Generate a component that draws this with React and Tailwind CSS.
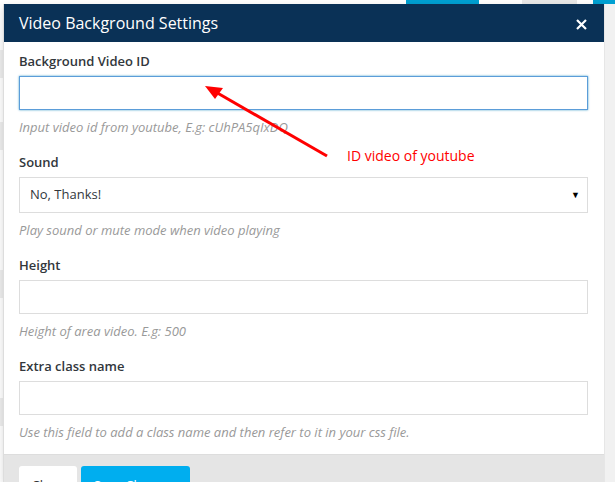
import React from 'react'

const font = { fontFamily: '"Open Sans", "Noto Sans", sans-serif' }

function Field({ label, hint, children }) {
  return (
    <div className="flex flex-col">
      <label className="text-[13px] leading-[20px] font-semibold text-[#32373c] mb-[5px]">{label}</label>
      {children}
      <p className="mt-[7px] text-[13px] leading-[20px] italic text-[#999]">{hint}</p>
    </div>
  )
}

function TextInput({ focused }) {
  return (
    <div className={focused
      ? 'h-[34px] bg-white border border-[#5b9dd9] shadow-[0_0_2px_rgba(30,140,190,0.8)]'
      : 'h-[34px] bg-white border border-[#ddd]'} />
  )
}

export default function App() {
  return (
    <div className="relative w-[615px] h-[482px] overflow-hidden bg-[#f1f1f1] flex flex-col" style={font}>
      {/* page behind the dialog */}
      <div className="h-[4px] flex bg-white shrink-0">
        <div className="w-[406px]" />
        <div className="w-[73px] bg-[#00a0d2]" />
        <div className="w-[43px]" />
        <div className="w-[55px] bg-[#e8e8e8]" />
        <div className="w-[16px]" />
        <div className="flex-1 bg-[#00a0d2]" />
      </div>
      <div className="flex flex-1 min-h-0">
        <div className="w-[3px] flex flex-col bg-white">
          <div className="h-[46px]" />
          <div className="h-[28px] bg-[#eee]" />
          <div className="h-[44px]" />
          <div className="h-[28px] bg-[#eee]" />
          <div className="h-[120px]" />
          <div className="h-[28px] bg-[#eee]" />
          <div className="h-[100px]" />
          <div className="h-[28px] bg-[#eee]" />
        </div>

        {/* dialog */}
        <div className="w-[601px] flex flex-col bg-white border-l border-[#ddd] shadow-[0_3px_8px_rgba(0,0,0,0.15)]">
          <div className="h-[38px] bg-[#0a3156] flex items-center justify-between pl-[15px] pr-[17px] shrink-0">
            <h2 className="text-[16px] text-white leading-none">Video Background Settings</h2>
            <svg width="11" height="11" viewBox="0 0 11 11" className="mt-[2px]">
              <path d="M1 1L10 10M10 1L1 10" stroke="white" strokeWidth="2.2" />
            </svg>
          </div>

          <div className="flex flex-col gap-[15px] pl-[15px] pr-4 pt-[9px] pb-[12px] border-b border-[#ddd]">
            <Field label="Background Video ID" hint="Input video id from youtube, E.g: cUhPA5qIxDQ">
              <TextInput focused />
            </Field>
            <Field label="Sound" hint="Play sound or mute mode when video playing">
              <div className="h-[36px] border border-[#ddd] bg-white flex items-center justify-between pl-[10px] pr-[7px]">
                <span className="text-[13px] text-[#32373c]">No, Thanks!</span>
                <span className="text-[9px] text-black">▼</span>
              </div>
            </Field>
            <Field label="Height" hint="Height of area video. E.g: 500">
              <TextInput />
            </Field>
            <Field label="Extra class name" hint="Use this field to add a class name and then refer to it in your css file.">
              <TextInput />
            </Field>
          </div>

          <div className="flex-1 bg-[#e5e5e5] flex items-start gap-[4px] pl-[15px] pt-[11px]">
            <button className="h-[40px] w-[58px] shrink-0 bg-white rounded-[3px] text-[13px] text-[#333]">Close</button>
            <button className="h-[40px] w-[109px] shrink-0 bg-[#00aeef] rounded-[3px] text-[13px] text-white">Save Changes</button>
          </div>
        </div>

        <div className="flex-1 bg-[#f1f1f1] border-l border-[#e6e6e6]" />
      </div>

      {/* annotation */}
      <svg className="absolute left-0 top-0 pointer-events-none" width="615" height="482">
        <line x1="327" y1="156" x2="214" y2="91" stroke="#ff0000" strokeWidth="3" />
        <polygon points="205,86 223,88 215,99" fill="#ff0000" />
      </svg>
      <span className="absolute left-[347px] top-[146px] text-[14px] leading-[20px] text-[#ff0000]">ID video of youtube</span>
    </div>
  )
}
